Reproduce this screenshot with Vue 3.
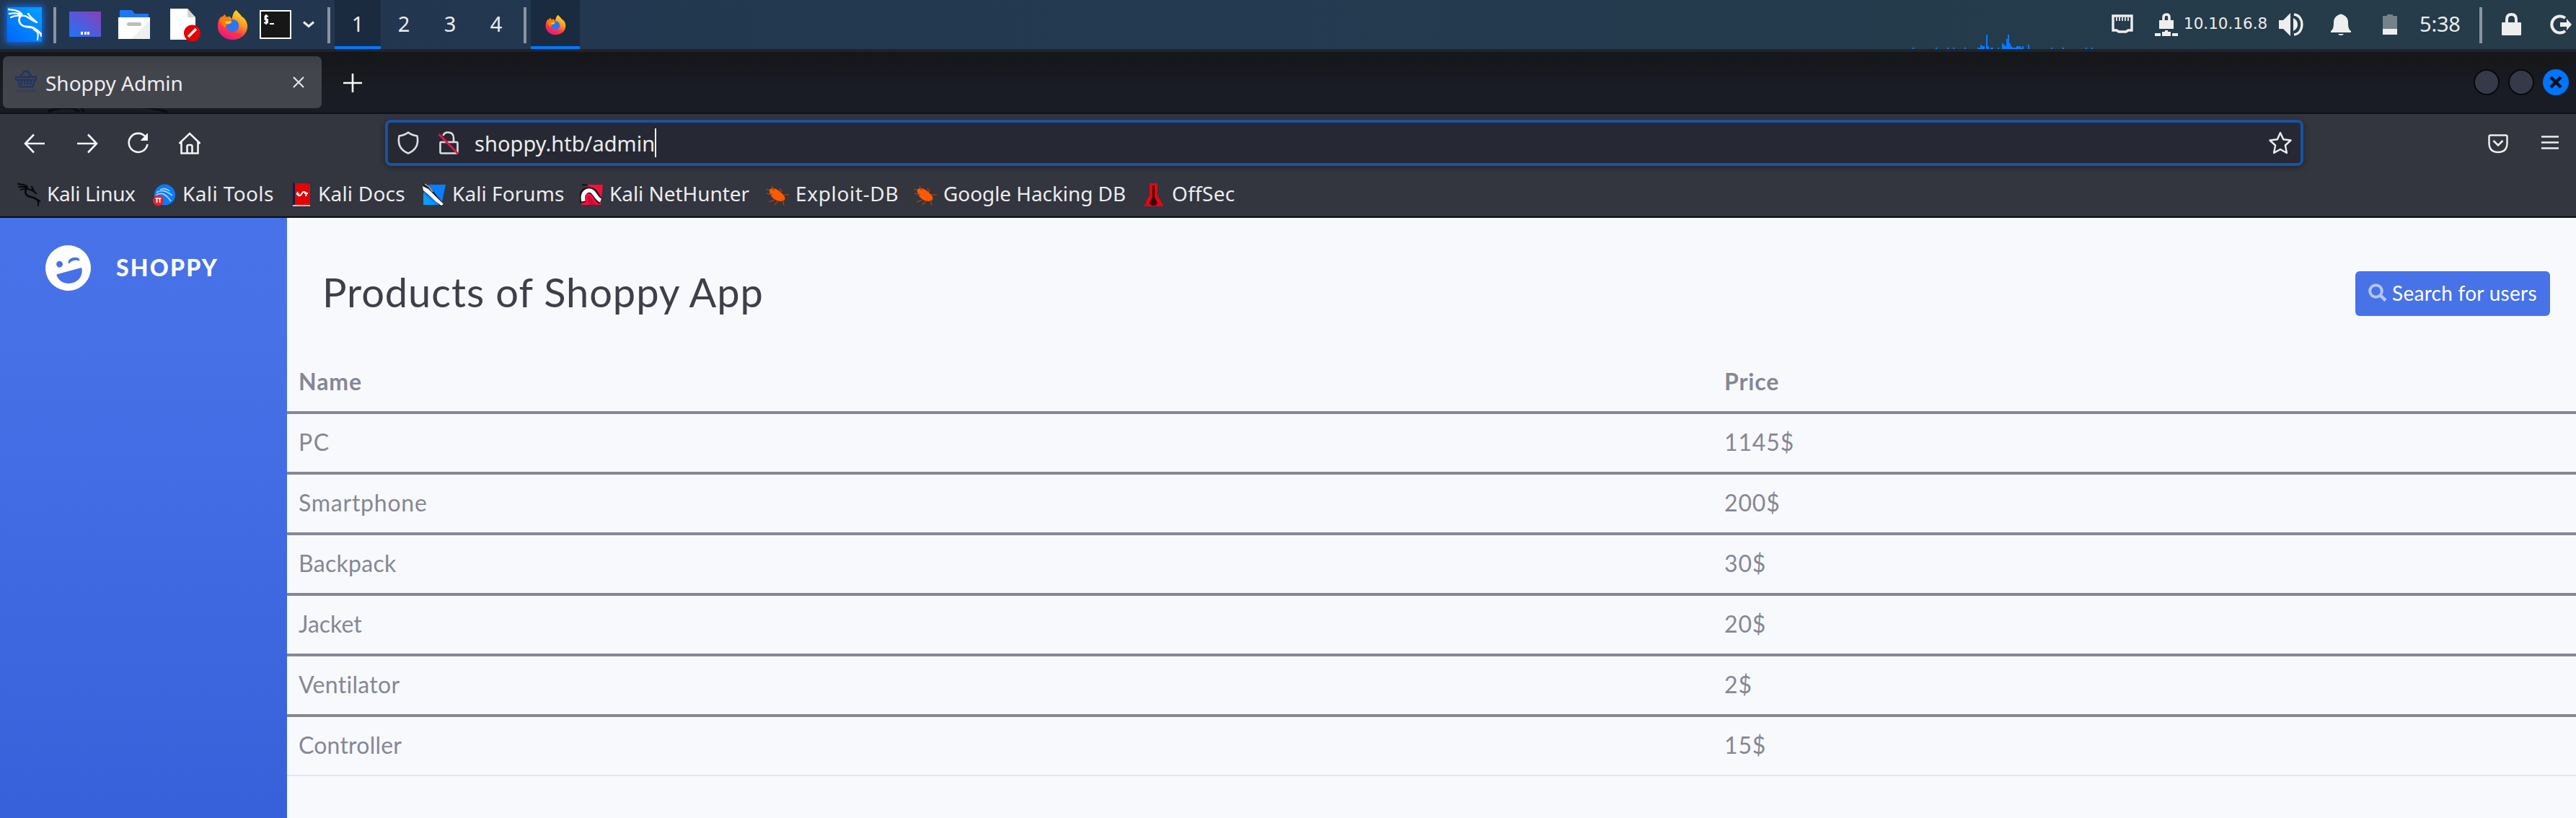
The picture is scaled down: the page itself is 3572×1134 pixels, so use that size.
<script setup>
const workspaces = [1, 2, 3, 4]

const netBars = [
  [52, 2], [84, 2], [100, 2], [108, 2], [124, 2], [142, 2], [144, 2], [146, 6], [148, 4], [150, 4],
  [154, 20], [156, 4], [160, 2], [162, 2], [170, 2], [176, 8], [178, 6], [180, 4], [182, 14],
  [184, 20], [186, 8], [188, 4], [190, 2], [192, 2], [194, 2], [196, 4], [198, 4], [200, 4],
  [202, 2], [204, 4], [212, 6], [244, 2], [260, 2], [292, 2], [300, 2],
]

const bookmarks = [
  { icon: 'b-linux', label: 'Kali Linux', width: 188, ls: -0.35 },
  { icon: 'b-tools', label: 'Kali Tools', width: 188, ls: 0.38 },
  { icon: 'b-docs', label: 'Kali Docs', width: 186, ls: 0.2 },
  { icon: 'b-forums', label: 'Kali Forums', width: 218, ls: 0.07 },
  { icon: 'b-nethunter', label: 'Kali NetHunter', width: 258, ls: -0.05 },
  { icon: 'b-exploit', label: 'Exploit-DB', width: 205, ls: 0.65 },
  { icon: 'b-exploit', label: 'Google Hacking DB', width: 317, ls: -0.07 },
  { icon: 'b-offsec', label: 'OffSec', width: 140, ls: 0.3 },
]

const products = [
  { name: 'PC', ls: 1.6, price: '1145$' },
  { name: 'Smartphone', ls: 0.75, price: '200$' },
  { name: 'Backpack', ls: 0.28, price: '30$' },
  { name: 'Jacket', ls: 0, price: '20$' },
  { name: 'Ventilator', ls: 0.3, price: '2$' },
  { name: 'Controller', ls: 0.2, price: '15$' },
]
</script>

<template>
  <div class="desktop">
    <svg class="sprite" aria-hidden="true">
      <defs>
        <linearGradient id="ffBody" x1="0.8" y1="0" x2="0.3" y2="1">
          <stop offset="0" stop-color="#ffe226" />
          <stop offset="0.4" stop-color="#ff9a1f" />
          <stop offset="0.7" stop-color="#ff3647" />
          <stop offset="1" stop-color="#e31587" />
        </linearGradient>
        <linearGradient id="deskGrad" x1="0" y1="1" x2="1" y2="0">
          <stop offset="0" stop-color="#1f74fb" />
          <stop offset="1" stop-color="#8a3fb8" />
        </linearGradient>
      </defs>
      <symbol id="firefox" viewBox="0 0 44 44">
        <path d="M27 1c3 3 6 6 8 9 5 3 8 8 8 14 0 11-9 19-21 19S1 35 1 24c0-6 2-11 5-14l1 4 4-7 2 4 5-1 3 4c1-5 2-10 6-13z" fill="url(#ffBody)" />
        <circle cx="22" cy="23" r="9" fill="#2a74f5" />
        <path d="M5 17c0-4 1-7 6-9l2 4 5-2c-1 3 0 5 3 6-2 4-5 4-8 4 1 4-1 6-2 6-3-2-5-5-6-9z" fill="#ff7a0a" />
        <path d="M11 18c3-2 6-1 10-1-1 4-5 4-8 4z" fill="#ffc21a" />
      </symbol>
      <symbol id="dragon" viewBox="0 0 48 48">
        <g fill="none" stroke="currentColor" stroke-linecap="round" stroke-linejoin="round">
          <path d="M2 3c7 1 13 1 18 6M3 9c6-1 11-1 17 1M5 14c4-2 9-3 14-2" stroke-width="2.400" />
          <path d="M19 11c-5 7-2 15 8 16 10 0 15 5 20 10" stroke-width="2.800" />
          <path d="M19 12c8-2 12 5 22 9M29 9l4 5 8 7" stroke-width="2.400" />
          <path d="M37 31c7 3 6 8 5 14M38 32c9 2 8 5 9 8" stroke-width="2" />
        </g>
      </symbol>
      <symbol id="b-linux" viewBox="0 0 32 32">
        <g fill="none" stroke="#08090b" stroke-linecap="round">
          <path d="M1 1c5 1 9 0 13 4M2 5c5 0 9-1 12 1M5 9c3-1 6-2 9-2" stroke-width="2.200" />
          <path d="M13 7c-4 6-1 11 6 12 6 1 8 4 12 6" stroke-width="2.600" />
          <path d="M13 8c6 0 9 2 13 6M20 5l3 6" stroke-width="2.200" />
          <path d="M25 21c5 3 4 6 4 10" stroke-width="2" />
        </g>
      </symbol>
      <symbol id="b-tools" viewBox="0 0 32 32">
        <circle cx="16.500" cy="16" r="14.500" fill="#0a7cf8" />
        <path d="M5 13c7-5 14-2 22 4M4 17c8-6 15-1 21 8M10 9c6-3 10-1 13 2" fill="none" stroke="#a9d4ff" stroke-width="1.700" />
        <circle cx="7.500" cy="24" r="7.500" fill="#e8202f" />
        <path d="M3.500 21h8M5.500 21v6M9.500 21v6" stroke="#fff" stroke-width="1.700" />
      </symbol>
      <symbol id="b-docs" viewBox="0 0 32 32">
        <path d="M6 0h3v30H6z" fill="#1a1747" />
        <path d="M9 0h19q2 1 2 5v25H9z" fill="#e50000" />
        <path d="M28 3h2v12h-2z" fill="#a0291c" />
        <path d="M6 30h24v2H6z" fill="#d9c9c9" />
        <path d="M13 12c-2 3 0 6 3 5s2-5 5-5 5 2 3 6M11 15h4M22 14h5" fill="none" stroke="#fff" stroke-width="2" />
      </symbol>
      <symbol id="b-forums" viewBox="0 0 32 32">
        <path d="M8 2h24l-6 28H1V14z" fill="#0b7dff" />
        <path d="M1 14l18 16H1z" fill="#079bff" />
        <path d="M1 0l7 2 9 12 10 12 3 4-5 2-6-6L7 16l-6-6z" fill="#17191d" />
        <path d="M0 4l8 4 8 8 9 9 4 4-3 2-7-5L7 15l-6-5z" fill="#fff" />
        <path d="M3 1l6 4 5 7" fill="none" stroke="#9a9a9a" stroke-width="2" />
      </symbol>
      <symbol id="b-nethunter" viewBox="0 0 32 32">
        <path d="M9 2h23l-3 28H2V14z" fill="#f5103a" />
        <path d="M3 2l8 1" stroke="#111" stroke-width="2" />
        <path d="M4 27C0 10 12 6 19 12c4 4 6 11 10 13" fill="none" stroke="#1c1517" stroke-width="9" />
        <path d="M5 25C2 12 12 7 18 12c4 4 6 10 11 12" fill="none" stroke="#fff" stroke-width="5.500" />
        <path d="M13 17c4 4 4 9 11 13H14c-3-4-5-9-1-13z" fill="#d3093a" />
      </symbol>
      <symbol id="b-exploit" viewBox="0 0 32 32">
        <path d="M5 9c5-5 13 0 20 8 3 5 1 8-4 8C12 25 4 17 5 9z" fill="#ff5a00" />
        <path d="M1 14l8 2M8 4l3 6M4 26l8-3M19 7l3 5M24 16l8 0M12 30l6-6M23 23l2 8M0 8l5 2" stroke="#9c4213" stroke-width="1.500" />
      </symbol>
      <symbol id="b-offsec" viewBox="0 0 32 32">
        <path d="M10 0h11v17l8 13v2H3v-2l7-13z" fill="#e30613" />
        <path d="M14 3h3v16l4 9-3 3h-5l-3-3 4-9z" fill="#3a0408" />
      </symbol>
    </svg>

    <!-- desktop panel -->
    <header class="panel">
      <div class="kali"><svg class="s48 dragon"><use href="#dragon" /></svg></div>
      <i class="sep"></i>
      <svg class="launch-desk" viewBox="0 0 44 36">
        <rect width="44" height="35" fill="url(#deskGrad)" />
        <path d="M16 28h3v4h-3zM21 28h3v4h-3zM25 28h3v4h-3z" fill="#fff" />
      </svg>
      <svg class="launch-files" viewBox="0 0 44 40">
        <path d="M2 0h17l4 5h19v6H2z" fill="#1c76f6" />
        <path d="M0 10h44v30H0z" fill="#fff" />
        <path d="M44 14v26H18z" fill="#efefef" />
        <rect x="12" y="17" width="20" height="5" rx="2.500" fill="#bdbdbd" />
      </svg>
      <svg class="launch-doc" viewBox="0 0 42 46">
        <path d="M0 0h24l11 12v31H0z" fill="#fff" />
        <path d="M24 0v12h11z" fill="#d2d2d2" />
        <circle cx="30.500" cy="34" r="11.500" fill="#e60000" />
        <path d="M25 39l8-8 3-3" stroke="#fff" stroke-width="3.500" />
      </svg>
      <svg class="launch-ff"><use href="#firefox" /></svg>
      <svg class="launch-term" viewBox="0 0 44 40">
        <rect x="1" y="1" width="42" height="38" fill="#171717" stroke="#fff" stroke-width="2" />
        <path d="M12 8.500H7.500v4.500H11v4.500H6M9 6v14M14 19h6" fill="none" stroke="#fff" stroke-width="1.800" />
      </svg>
      <svg class="chev" viewBox="0 0 16 10"><path d="M1 1.500l7 6 7-6" fill="none" stroke="#eee" stroke-width="3" /></svg>
      <i class="sep sep2"></i>
      <div v-for="n in workspaces" :key="n" class="ws" :class="{ on: n === 1 }">{{ n }}</div>
      <i class="sep sep3"></i>
      <div class="task"><svg class="s30"><use href="#firefox" /></svg></div>
      <div class="grow"></div>
      <svg class="net" viewBox="0 0 320 20">
        <rect v-for="b in netBars" :key="b[0]" :x="b[0]" :y="20 - b[1]" width="2" :height="b[1]" fill="#067bff" />
      </svg>
      <svg class="t-eth" viewBox="0 0 30 26">
        <path d="M2 2h26v20h-5l-3 2H10l-3-2H2z" fill="none" stroke="#eee" stroke-width="3.400" />
        <path d="M7 4v5M11 4v5M15 4v5M19 4v5M23 4v5" stroke="#eee" stroke-width="1.800" />
      </svg>
      <svg class="t-vpn" viewBox="0 0 32 32">
        <path d="M12 12V6q0-4 4-4t4 4v6" fill="none" stroke="#eee" stroke-width="3.600" />
        <path d="M6 10h20v12H6zM0 28h8v4H0zM10 26h4v-2h4v2h4v6H10zM24 28h8v4h-8z" fill="#eee" />
      </svg>
      <span class="ip">10.10.16.8</span>
      <svg class="t-vol" viewBox="0 0 34 32">
        <path d="M0 10h6L16 0v32L6 22H0z" fill="#eee" />
        <path d="M20 7q6 3 6 9t-6 9z" fill="#eee" />
        <path d="M21 2c8 1 11 8 11 14s-3 13-11 14" fill="none" stroke="#eee" stroke-width="3.400" />
      </svg>
      <svg class="t-bell" viewBox="0 0 28 31">
        <path d="M10 2q4-3 8 0 6 3 6 10c0 7 1 10 4 12v2H0v-2c3-2 4-5 4-12Q4 5 10 2zM10 28h8q-1 2-4 2t-4-2z" fill="#eee" />
      </svg>
      <svg class="t-bat" viewBox="0 0 20 28">
        <path d="M0 2h6V0h8v2h6v18H0z" fill="#758288" />
        <path d="M0 20h20v8H0z" fill="#eee" />
      </svg>
      <span class="clock">5:38</span>
      <i class="sep sep4"></i>
      <svg class="t-lock" viewBox="0 0 27 32">
        <path d="M7 15V9q0-7 6.500-7T20 9v6" fill="none" stroke="#eee" stroke-width="4" />
        <rect y="13" width="27" height="18" rx="1" fill="#eee" />
      </svg>
      <svg class="t-out" viewBox="0 0 30 28">
        <path d="M21 5A11.500 11.500 0 1 0 21 23" fill="none" stroke="#eee" stroke-width="4" />
        <path d="M14 11h9V6l7 8-7 8v-5h-9z" fill="#eee" />
      </svg>
    </header>

    <!-- browser tab strip -->
    <div class="tabs">
      <svg class="wall" viewBox="0 0 400 10">
        <path d="M52 9q14-8 34-6M84 0l16 9M102 0l5 9M190 1q26 1 46 9" fill="none" stroke="#0c0d10" stroke-width="4" />
      </svg>
      <div class="tab">
        <svg class="fav" viewBox="0 0 32 34">
          <g fill="none" stroke="#1f3564" stroke-width="2.400">
            <path d="M1 9h29v4H1zM4 14l3 9h18l3-9M7 9l6-8h5l6 8" />
            <path d="M9 14v6M13.500 14v6M18 14v6M22.500 14v6" />
          </g>
          <path d="M0 29h31" stroke="#343e59" stroke-width="3" stroke-dasharray="3 1" />
        </svg>
        <span class="tab-title">Shoppy Admin</span>
        <svg class="tab-x" viewBox="0 0 16 16"><path d="M1 1l14 14M15 1L1 15" stroke="#e4e4e6" stroke-width="2.200" /></svg>
      </div>
      <svg class="plus" viewBox="0 0 26 26"><path d="M13 0v26M0 13h26" stroke="#fbfbfe" stroke-width="2.600" /></svg>
      <div class="grow"></div>
      <i class="wb"></i><i class="wb"></i>
      <svg class="wb-close" viewBox="0 0 36 36">
        <circle cx="18" cy="18" r="18" fill="#0075ff" />
        <path d="M11 11l14 14M25 11L11 25" stroke="#071018" stroke-width="4.400" />
      </svg>
    </div>

    <!-- navigation toolbar -->
    <div class="nav">
      <svg class="nb n1" viewBox="0 0 32 32"><path d="M30 16H4M15 3.500L3 16l12 12.500" /></svg>
      <svg class="nb n2" viewBox="0 0 32 32"><path d="M2 16h26M17 3.500L29 16 17 28.500" /></svg>
      <svg class="nb n3" viewBox="0 0 32 32">
        <path d="M26 7A13 13 0 1 0 28.500 17" />
        <path d="M28.500 2v9.500h-9z" fill="#fbfbfe" stroke-width="1" />
      </svg>
      <svg class="nb n4" viewBox="0 0 32 32">
        <path d="M1.500 16L16 2l14.500 14M4.500 14v15.500h23V14M12.500 29V20q0-2 2-2h3q2 0 2 2v9" />
      </svg>
      <div class="url">
        <svg class="shield" viewBox="0 0 30 32">
          <path d="M15 1.500q5 4 12.500 5Q31 24 15 30.500-1 24 2.500 6.500 10 5.500 15 1.500z" fill="none" stroke="#dcdde0" stroke-width="2.600" stroke-linejoin="round" />
        </svg>
        <svg class="unlock" viewBox="0 0 28 32">
          <path d="M6.500 6Q8 1.500 13 1.500q8 0 8 8V15M3 15h22q1.500 0 1.500 2v12q0 1.500-1.500 1.500H4q-1.500 0-1.500-1.500V17q0-2 1-2" fill="none" stroke="#dcdde0" stroke-width="2.600" />
          <path d="M0.500 4L27 31" stroke="#e8114b" stroke-width="3" />
        </svg>
        <span class="addr">shoppy.htb/admin</span><i class="caret"></i>
        <div class="grow"></div>
        <svg class="star" viewBox="0 0 32 32">
          <path d="M16 2l4.200 9.300 10.300 1.200-7.600 7 2 10.500L16 25l-8.900 5 2-10.500-7.600-7 10.300-1.200z" fill="none" stroke="#eee" stroke-width="2.400" stroke-linejoin="round" />
        </svg>
      </div>
      <svg class="pocket" viewBox="0 0 28 27">
        <path d="M3.500 1.500h21q2 0 2 2V12q0 13-12.500 13T1.500 12V3.500q0-2 2-2z M7.500 9l6.500 6.500L20.500 9" fill="none" stroke="#eee" stroke-width="2.500" />
      </svg>
      <svg class="burger" viewBox="0 0 24 20"><path d="M0 1.500h24M0 9.500h24M0 17.500h24" stroke="#eee" stroke-width="2.600" /></svg>
    </div>

    <!-- bookmarks toolbar -->
    <div class="marks">
      <div v-for="b in bookmarks" :key="b.label" class="mark" :style="{ width: b.width + 'px' }">
        <svg class="s32"><use :href="'#' + b.icon" /></svg>
        <span :style="{ letterSpacing: b.ls + 'px' }">{{ b.label }}</span>
      </div>
    </div>

    <!-- page -->
    <div class="page">
      <aside class="side">
        <svg class="smile" viewBox="0 0 496 496">
          <circle cx="248" cy="248" r="248" fill="#fff" />
          <g fill="#4671e8">
            <circle cx="168" cy="184" r="35" />
            <path d="M120 282h256q18 0 15 18c-14 70-66 118-143 118s-129-48-143-118q-3-18 15-18z" />
            <path d="M264 193c6-54 122-54 128 0 0 12-12 12-18 6-20-17-72-17-92 0-7 6-18 5-18-6z" />
          </g>
        </svg>
        <b class="brand">SHOPPY</b>
      </aside>
      <main class="main">
        <div class="head">
          <h1>Products of Shoppy App</h1>
          <a class="btn">
            <svg class="mag" viewBox="0 0 26 26">
              <circle cx="10.500" cy="10.500" r="8.300" fill="none" stroke="#b4c6f6" stroke-width="4" />
              <path d="M16.500 16.500l7.500 7" stroke="#b4c6f6" stroke-width="4.500" />
            </svg>
            <span>Search for users</span>
          </a>
        </div>
        <div class="row th"><span class="c1">Name</span><span>Price</span></div>
        <div v-for="p in products" :key="p.name" class="row">
          <span class="c1" :style="{ letterSpacing: p.ls + 'px' }">{{ p.name }}</span>
          <span class="c2">{{ p.price }}</span>
        </div>
      </main>
    </div>
  </div>
</template>

<style>
body { background: #f8f9fd; }
</style>

<style scoped>
.desktop {
  width: 3572px;
  height: 1134px;
  overflow: hidden;
  display: flex;
  flex-direction: column;
  font-family: "Noto Sans", sans-serif;
  font-size: 28px;
  color: #ececee;
  position: relative;
}
.desktop * { box-sizing: border-box; }
svg { display: block; flex: none; overflow: visible; }
.sprite { position: absolute; width: 0; height: 0; }
.grow { flex: 1; }
.s48 { width: 48px; height: 48px; }
.s30 { width: 29px; height: 29px; }
.s32 { width: 32px; height: 32px; }

.panel {
  height: 68px;
  flex: none;
  display: flex;
  align-items: center;
  background: linear-gradient(90deg, #22364f 0, #233a50 50%, #243b4c 75%, #263c49 100%);
}
.kali {
  width: 48px;
  height: 48px;
  margin-left: 10px;
  background: linear-gradient(45deg, #0066ff, #00a2ff);
  box-shadow: 0 0 9px 2px #0b6ef0;
}
.dragon { color: #fff; }
.sep { width: 4px; height: 50px; margin: 2px 0 0 16px; background: #8a93a1; flex: none; }
.launch-desk { width: 44px; height: 36px; margin-left: 18px; }
.launch-files { width: 44px; height: 40px; margin-left: 24px; }
.launch-doc { width: 42px; height: 46px; margin: 2px 0 0 28px; }
.launch-ff { width: 43px; height: 43px; margin-left: 23px; }
.launch-term { width: 44px; height: 40px; margin-left: 16px; }
.chev { width: 16px; height: 10px; margin-left: 16px; }
.sep2 { margin-left: 18px; }
.ws { width: 64px; height: 68px; line-height: 66px; text-align: center; font-size: 29px; }
.sep2 + .ws { margin-left: 6px; }
.on, .task { background: #1a2b3f; box-shadow: inset 0 -4px #0078ff; }
.sep3 { margin-left: 6px; }
.task { width: 68px; height: 68px; margin-left: 6px; display: flex; align-items: center; justify-content: center; }
.net { width: 320px; height: 20px; margin-right: 8px; align-self: flex-end; }
.t-eth { width: 30px; height: 26px; margin: 0 30px 2px 0; }
.t-vpn { width: 32px; height: 32px; }
.ip { font: 21.5px/30px "DejaVu Sans", sans-serif; width: 132px; margin: 0 0 3px 8px; white-space: nowrap; }
.t-vol { width: 34px; height: 32px; margin-right: 38px; }
.t-bell { width: 28px; height: 31px; margin-right: 44px; }
.t-bat { width: 20px; height: 28px; margin-right: 31px; }
.clock { font-size: 29px; line-height: 66px; width: 62px; letter-spacing: -0.2px; margin-bottom: 2px; }
.sep4 { margin-left: 21px; }
.t-lock { width: 27px; height: 32px; margin-left: 27px; }
.t-out { width: 30px; height: 28px; margin: 0 6px 0 40px; }

.tabs {
  height: 90px;
  flex: none;
  position: relative;
  display: flex;
  align-items: center;
  padding: 6px 10px 6px 4px;
  background: linear-gradient(#16171b 4px, #17181c 20px, #191c24 50px);
  border-top: 4px solid #212329;
  border-bottom: 2px solid #111318;
}
.wall { position: absolute; left: 0; bottom: 0; width: 400px; height: 9px; overflow: hidden; }
.tab {
  width: 442px;
  height: 72px;
  border-radius: 7px;
  background: linear-gradient(#3d3f46, #43454c 20px);
  display: flex;
  align-items: center;
  position: relative;
}
.fav { width: 31px; height: 33px; margin-left: 17px; }
.tab-title { width: 190px; margin: 1px 0 0 11px; white-space: nowrap; }
.tab-x { width: 16px; height: 16px; margin-left: 153px; }
.plus { width: 26px; height: 26px; margin: 2px 0 0 30px; }
.wb {
  width: 36px;
  height: 36px;
  border-radius: 50%;
  border: 2px solid #08090b;
  background: #363a48;
  margin-right: 12px;
}
.wb-close { width: 36px; height: 36px; }

.nav { height: 80px; flex: none; display: flex; align-items: center; background: #33353f; }
.nb { width: 32px; height: 32px; margin-top: 2px; fill: none; stroke: #f4f4f6; stroke-width: 2.6; }
.n1 { margin-left: 32px; }
.n2 { margin-left: 41px; }
.n3 { margin-left: 39px; }
.n4 { margin-left: 39px; }
.url {
  width: 2660px;
  height: 64px;
  margin-left: 255px;
  border: 4px solid #1c52a0;
  border-radius: 8px;
  background: #262933;
  box-shadow: 0 2px 8px #22242c;
  display: flex;
  align-items: center;
}
.shield { width: 30px; height: 32px; margin-left: 13px; }
.unlock { width: 28px; height: 32px; margin-left: 27px; }
.addr { font-size: 29px; letter-spacing: 0.05px; margin: 1px 0 0 22px; white-space: nowrap; }
.caret { width: 2px; height: 40px; background: #fff; }
.star { width: 32px; height: 32px; margin-right: 12px; }
.pocket { width: 28px; height: 27px; margin: 2px 0 0 256px; }
.burger { width: 24px; height: 20px; margin-left: 46px; }

.marks {
  height: 64px;
  flex: none;
  display: flex;
  align-items: center;
  padding-left: 24px;
  background: #33353f;
  border-bottom: 2px solid #0d0e11;
}
.mark { display: flex; align-items: center; gap: 9px; white-space: nowrap; margin-top: 1px; }
.mark span { margin-top: -3px; }

.page {
  flex: 1;
  display: flex;
  background: #f8f9fd;
  font-family: Lato, sans-serif;
  color: #858796;
}
.side {
  width: 398px;
  flex: none;
  display: flex;
  align-items: flex-start;
  padding: 38px 0 0 63px;
  background: linear-gradient(#4772e8 0, #4671e7 20%, #3761da 100%);
}
.smile { width: 63px; height: 63px; transform: rotate(-15deg); }
.brand {
  margin: 6px 0 0 35px;
  font-size: 32px;
  line-height: 50px;
  font-weight: 900;
  letter-spacing: 2.2px;
  color: #fff;
}
.main { flex: 1; display: flex; flex-direction: column; }
.head { height: 188px; flex: none; display: flex; justify-content: space-between; align-items: flex-start; padding: 0 36px 0 49px; }
h1 { margin: 73px 0 0; font-size: 56px; line-height: 60px; font-weight: 400; letter-spacing: 0.92px; color: #3e3f4b; }
.btn {
  width: 270px;
  height: 62px;
  margin-top: 74px;
  padding: 0 0 3px 18px;
  border-radius: 6px;
  background: #4772e8;
  color: #fff;
  display: flex;
  align-items: center;
  font-size: 28px;
  letter-spacing: 0.28px;
  white-space: nowrap;
}
.mag { width: 26px; height: 26px; margin-right: 7px; }
.row {
  height: 84px;
  flex: none;
  display: flex;
  align-items: center;
  padding: 0 0 4px 16px;
  border-bottom: 4px solid #858796;
  font-size: 32px;
}
.row:last-child { height: 82px; border-bottom: 2px solid #e3e6f0; }
.c1 { width: 1977px; }
.c2 { letter-spacing: 0.85px; }
.th { font-weight: 700; letter-spacing: 0.9px; }
</style>
